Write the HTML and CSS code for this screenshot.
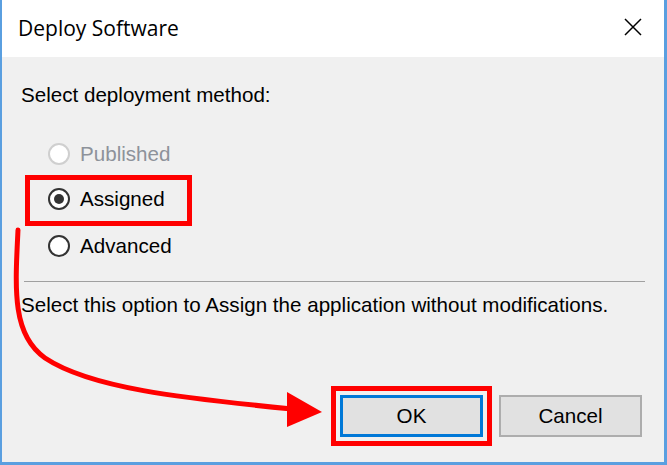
FILE: index.html
```html
<!DOCTYPE html>
<html>
<head>
<meta charset="utf-8">
<link rel="stylesheet" href="styles.css">
</head>
<body>
<div class="window">
  <div class="titlebar">
    <span class="title">Deploy Software</span>
    <svg class="close" width="18" height="18" viewBox="0 0 18 18"><path d="M1 1L17 17M17 1L1 17" stroke="#000" stroke-width="1.5" fill="none"/></svg>
  </div>
  <div class="body">
    <p class="prompt">Select deployment method:</p>
    <div class="options">
      <div class="opt disabled"><span class="lbl"><span class="radio"></span>Published</span></div>
      <div class="opt"><span class="lbl mark"><span class="radio checked"></span>Assigned</span></div>
      <div class="opt"><span class="lbl"><span class="radio"></span>Advanced</span></div>
    </div>
    <div class="sep"></div>
    <p class="desc">Select this option to Assign the application without modifications.</p>
    <div class="buttons">
      <button class="btn default mark-btn">OK</button>
      <button class="btn">Cancel</button>
    </div>
  </div>
  <svg class="arrow" width="667" height="465" viewBox="0 0 667 465">
    <path d="M18 230 C 15 290, 12 335, 45 358 C 90 388, 180 398, 292 409" stroke="#f00" stroke-width="5" fill="none" stroke-linecap="round"/>
    <polygon points="287,392 322,412 287,427" fill="#f00"/>
  </svg>
</div>
</body>
</html>
```
FILE: styles.css
```css
html, body {
  margin: 0;
  padding: 0;
}
body {
  width: 667px;
  height: 465px;
  overflow: hidden;
  background: #f0f0f0;
}
.window {
  position: relative;
  box-sizing: border-box;
  width: 667px;
  height: 465px;
  border-left: 2px solid #5a9fe0;
  border-right: 3px solid #5a9fe0;
  border-bottom: 3px solid #5a9fe0;
  background: #f0f0f0;
  font-family: "Liberation Sans", Arial, sans-serif;
  color: #000;
  display: flex;
  flex-direction: column;
}
.titlebar {
  height: 57px;
  background: #fff;
  display: flex;
  align-items: center;
  justify-content: space-between;
  padding: 0 22px 0 16px;
}
.title {
  font-family: "Open Sans", sans-serif;
  font-size: 21px;
  color: #000;
  margin-top: -1px;
}
.close {
  display: block;
  margin-top: -3px;
}
.body {
  flex: 1;
  padding: 0 19px;
  font-size: 20.6px;
}
.prompt {
  margin: 28px 0 0;
  line-height: 20px;
}
.options {
  margin-top: 26px;
  padding-left: 27px;
}
.opt {
  height: 46px;
  display: flex;
  align-items: center;
}
.lbl {
  display: inline-flex;
  align-items: center;
  height: 38px;
}
.radio {
  box-sizing: border-box;
  width: 22px;
  height: 22px;
  border: 2px solid #333;
  border-radius: 50%;
  background: #fff;
  margin-right: 10px;
  display: inline-flex;
  align-items: center;
  justify-content: center;
}
.radio.checked::after {
  content: "";
  width: 10px;
  height: 10px;
  border-radius: 50%;
  background: #333;
}
.opt.disabled {
  color: #8d929a;
}
.opt.disabled .radio {
  border-color: #cfcfcf;
}
.mark {
  margin-left: -18px;
  padding: 0 22px 3px 18px;
  outline: 5px solid #f00;
}
.sep {
  margin-top: 12px;
  margin-left: 3px;
  margin-right: 0;
  border-top: 1px solid #a0a0a0;
}
.desc {
  margin: 13px 0 0;
  line-height: 20px;
}
.buttons {
  margin-top: 80px;
  display: flex;
  justify-content: flex-end;
  gap: 16px;
  padding-right: 3px;
}
.btn {
  box-sizing: border-box;
  width: 143px;
  height: 42px;
  background: #e1e1e1;
  border: 2px solid #adadad;
  font-family: "Liberation Sans", Arial, sans-serif;
  font-size: 20.6px;
  color: #000;
  padding: 0;
}
.btn.default {
  border: 3px solid #0078d7;
}
.mark-btn {
  outline: 5px solid #f00;
  outline-offset: 4px;
}
.arrow {
  position: absolute;
  left: -2px;
  top: 0;
  pointer-events: none;
}
```
